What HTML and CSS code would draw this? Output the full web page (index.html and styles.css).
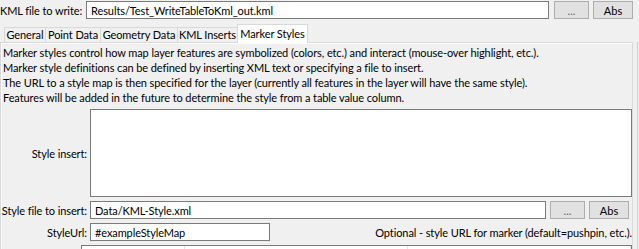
FILE: index.html
```html
<!DOCTYPE html>
<html lang="en">
<head>
<meta charset="UTF-8">
<title>Write Table To KML</title>
<link rel="stylesheet" href="styles.css">
</head>
<body>

<div class="top-row">
    <label class="top-label"><span>KML file to write:</span></label>
    <input class="field grow" type="text" value="Results/Test_WriteTableToKml_out.kml">
    <button class="btn dots">...</button>
    <button class="btn abs">Abs</button>
</div>

<div class="tabs">
    <div class="tab t-general">General</div>
    <div class="tab t-point">Point Data</div>
    <div class="tab t-geom">Geometry Data</div>
    <div class="tab t-kml">KML Inserts</div>
    <div class="tab t-marker active">Marker Styles</div>
</div>

<div class="panel">
    <div class="desc">
        <p>Marker styles control how map layer features are symbolized (colors, etc.) and interact (mouse-over highlight, etc.).</p>
        <p>Marker style definitions can be defined by inserting XML text or specifying a file to insert.</p>
        <p>The URL to a style map is then specified for the layer (currently all features in the layer will have the same style).</p>
        <p>Features will be added in the future to determine the style from a table value column.</p>
    </div>

    <div class="form-row">
        <label class="label">Style insert:</label>
        <textarea class="area"></textarea>
    </div>

    <div class="form-row">
        <label class="label">Style file to insert:</label>
        <input class="field grow" type="text" value="Data/KML-Style.xml">
        <button class="btn dots">...</button>
        <button class="btn abs end">Abs</button>
    </div>

    <div class="form-row">
        <label class="label">StyleUrl:</label>
        <input class="field url" type="text" value="#exampleStyleMap">
        <span class="note">Optional - style URL for marker (default=pushpin, etc.).</span>
    </div>

    <div class="next-row">
        <div class="next-box">
            <span class="cell first"></span>
            <span class="cell"></span>
            <span class="cell"></span>
        </div>
    </div>
</div>

</body>
</html>
```

FILE: styles.css
```css
body {
    margin: 0;
    padding: 0;
    width: 639px;
    height: 249px;
    overflow: hidden;
    font-family: "Lato", "Open Sans", sans-serif;
    font-size: 11px;
    letter-spacing: -0.1px;
    color: #000;
    background-color: #f0f0f0;
}
.top-row {
    display: flex;
    align-items: center;
    height: 18px;
    margin-top: 1px;
    padding-right: 6px;
}
.top-label {
    display: flex;
    justify-content: flex-end;
    flex: 0 0 82px;
    padding-right: 4px;
    box-sizing: border-box;
    white-space: nowrap;
}
.field {
    height: 18px;
    box-sizing: border-box;
    border: 1px solid #7a7a7a;
    background-color: #fff;
    font-family: inherit;
    font-size: 11px;
    letter-spacing: inherit;
    color: #000;
    padding: 0 4px;
    margin: 0;
}
.grow {
    flex: 1;
    min-width: 0;
}
.btn {
    height: 18px;
    box-sizing: border-box;
    border: 1px solid #adadad;
    background-color: #e1e1e1;
    font-family: inherit;
    font-size: 11px;
    color: #000;
    padding: 0;
    margin-left: 4px;
}
.top-row .dots {
    margin-left: 5px;
}
.dots {
    width: 35px;
    color: #666;
}
.abs {
    width: 40px;
}
.abs.end {
    margin-right: 3px;
}
.tabs {
    display: flex;
    align-items: flex-end;
    height: 18px;
    margin-top: 5px;
    padding-left: 4px;
    position: relative;
    z-index: 1;
}
.tab {
    height: 15px;
    box-sizing: border-box;
    line-height: 14px;
    text-align: center;
    white-space: nowrap;
    border: 1px solid #d9d9d9;
    border-bottom: none;
    border-right: none;
    background-color: #f0f0f0;
}
.t-general { width: 41px; }
.t-point { width: 55px; }
.t-geom { width: 77px; }
.t-kml { width: 60px; }
.tab.active {
    width: 71px;
    height: 19px;
    margin-bottom: -1px;
    line-height: 17px;
    background-color: #fff;
    border-right: 1px solid #d9d9d9;
}
.panel {
    width: 633px;
    height: 207px;
    overflow: hidden;
    box-sizing: border-box;
    border: 1px solid #d9d9d9;
    border-bottom: none;
    background-color: #f0f0f0;
    box-shadow: inset 0 1px 0 #fff, inset 1px 0 0 #fff, 4px 0 0 #f0f0f0, 5px 0 0 #cfcfcf;
    padding-top: 2px;
}
.desc {
    padding-left: 2px;
}
.desc p {
    margin: 0;
    line-height: 15px;
    white-space: nowrap;
}
.form-row {
    display: flex;
    align-items: center;
    margin-top: 4px;
}
.form-row:first-of-type {
    margin-top: 0;
}
.label {
    flex: 0 0 89px;
    padding-right: 3px;
    box-sizing: border-box;
    text-align: right;
    white-space: nowrap;
}
.area {
    flex: 1;
    height: 88px;
    box-sizing: border-box;
    border: 1px solid #7a7a7a;
    background-color: #fff;
    resize: none;
    margin: 0;
}
.url {
    width: 180px;
}
.note {
    flex: 1;
    text-align: right;
    white-space: nowrap;
}
.next-row {
    margin-top: 4px;
    padding-left: 80px;
}
.next-box {
    display: flex;
    height: 18px;
    border: 1px solid #7a7a7a;
    background-color: #fff;
}
.cell {
    flex: 1;
    border-right: 1px solid #e5e5e5;
}
.cell.first {
    flex: 0 0 102px;
}
```
